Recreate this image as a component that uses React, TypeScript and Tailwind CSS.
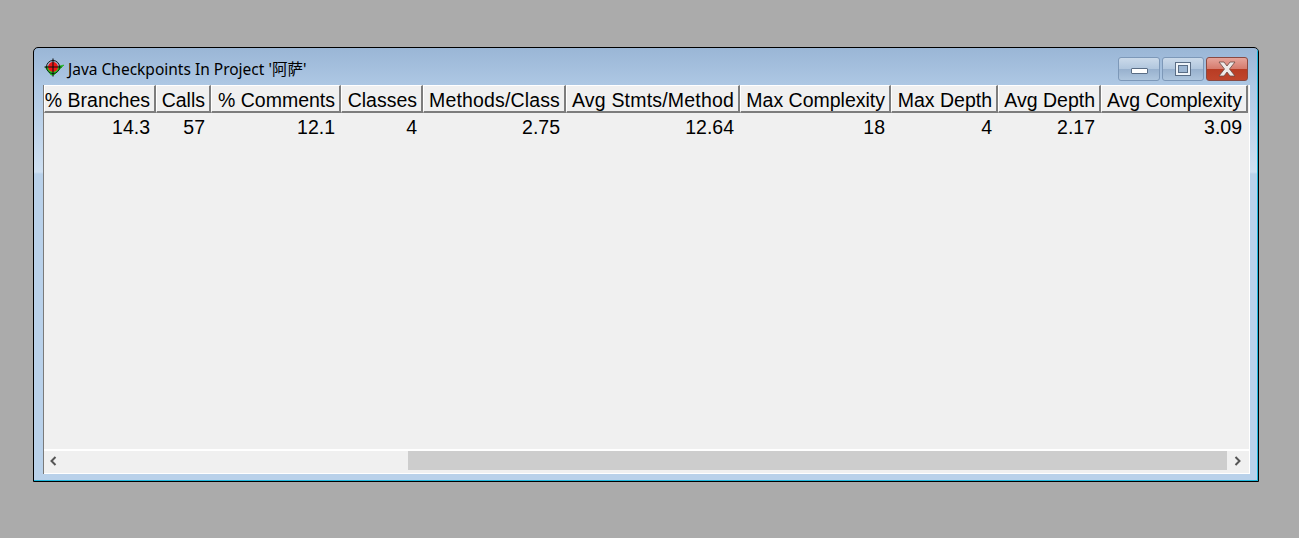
import React from "react";

const columns = [
  { label: "% Branches", value: "14.3", width: "w-[112px]", tracking: "" },
  { label: "Calls", value: "57", width: "w-[55px]", tracking: "" },
  { label: "% Comments", value: "12.1", width: "w-[130px]", tracking: "" },
  { label: "Classes", value: "4", width: "w-[82px]", tracking: "" },
  { label: "Methods/Class", value: "2.75", width: "w-[143px]", tracking: "tracking-[0.15px]" },
  { label: "Avg Stmts/Method", value: "12.64", width: "w-[174px]", tracking: "tracking-[0.19px]" },
  { label: "Max Complexity", value: "18", width: "w-[151px]", tracking: "" },
  { label: "Max Depth", value: "4", width: "w-[107px]", tracking: "" },
  { label: "Avg Depth", value: "2.17", width: "w-[103px]", tracking: "" },
  { label: "Avg Complexity", value: "3.09", width: "w-[147px]", tracking: "" },
];

const CheckpointIcon = () => (
  <svg width="22" height="22" viewBox="0 0 22 22" className="shrink-0">
    <path d="M2 10 L5 9.5 L10 14 L16 9 L21 8 L11 18 L8 18 Z" fill="#22e022" stroke="#119a11" strokeWidth="0.5" />
    <circle cx="10" cy="10" r="5" fill="#ee1414" />
    <circle cx="10" cy="10" r="6.5" fill="none" stroke="#111" strokeWidth="1" />
    <path d="M10 1.5 V19.5 M1.5 10 H18.5" stroke="#111" strokeWidth="1.1" />
  </svg>
);

const App: React.FC = () => {
  return (
    <div className="h-[538px] w-[1299px] overflow-hidden bg-[#ababab] pl-[33px] pt-[47px]">
      {/* Window */}
      <div className="h-[435px] w-[1226px] overflow-hidden rounded-t-[5px] border border-black bg-[linear-gradient(180deg,#9ab6d6_0px,#aec8e4_38px,#cfe0f2_124px,#b9d1ea_126px,#b9d1ea_100%)]">
        <div className="flex h-full flex-col border-b border-r border-[#1fb6dc]">
          {/* Title bar */}
          <div className="flex h-[37px] shrink-0 items-start pl-[9px] pr-[9px] pt-[9px]">
            <CheckpointIcon />
            <span className="ml-[3px] mt-[3px] text-[15.5px] leading-[19px] text-black [font-family:'Noto_Sans','Noto_Sans_CJK_SC',sans-serif]">
              Java Checkpoints In Project '阿萨'
            </span>
            <div className="ml-auto flex gap-[2px]">
              <div className="flex h-[24px] w-[42px] items-center justify-center rounded-[3px] border border-[#7d98b8] bg-[linear-gradient(180deg,#cbdaea_0%,#b2c7de_48%,#98b1ce_52%,#afc6de_100%)]">
                <div className="mt-[3px] h-[6px] w-[17px] rounded-[1px] border border-[#5a6d85] bg-white" />
              </div>
              <div className="flex h-[24px] w-[42px] items-center justify-center rounded-[3px] border border-[#7d98b8] bg-[linear-gradient(180deg,#cbdaea_0%,#b2c7de_48%,#98b1ce_52%,#afc6de_100%)]">
                <div className="h-[14px] w-[16px] border border-[#5a6d85] bg-[#eef3f8] p-[2px]">
                  <div className="h-full w-full border border-[#5a6d85] bg-[#9db6d2]" />
                </div>
              </div>
              <div className="flex h-[24px] w-[42px] items-center justify-center rounded-[3px] border border-[#8a4a42] bg-[linear-gradient(180deg,#e6a59b_0%,#d67c6e_48%,#b83c24_52%,#c0452c_100%)]">
                <svg width="20" height="16" viewBox="0 0 20 16">
                  <path
                    d="M2 1 H7 L10 5 L13 1 H18 L12.5 8 L18 15 H13 L10 11 L7 15 H2 L7.5 8 Z"
                    fill="#eeeae8"
                    stroke="#6b4a44"
                    strokeWidth="0.8"
                  />
                </svg>
              </div>
            </div>
          </div>

          {/* Table area */}
          <div className="ml-[9px] flex h-[389px] w-[1207px] flex-col border-l border-r border-l-[#7a7a7a] border-r-white bg-[#f0f0f0] [font-family:'Liberation_Sans',sans-serif]">
            <div className="flex h-[28px] shrink-0">
              {columns.map((c) => (
                <div
                  key={c.label}
                  className={`${c.width} ${c.tracking} flex shrink-0 items-center justify-end overflow-hidden whitespace-nowrap border-b-2 border-l border-r-2 border-t border-b-[#7d7d7d] border-l-white border-r-[#7d7d7d] border-t-white pr-[4px] pt-[2px] text-[19.5px] leading-[26px] text-black`}
                >
                  {c.label}
                </div>
              ))}
            </div>
            <div className="flex h-[28px] shrink-0">
              {columns.map((c) => (
                <div
                  key={c.label}
                  className={`${c.width} shrink-0 pr-[6px] text-right text-[19.5px] leading-[29px] text-black`}
                >
                  {c.value}
                </div>
              ))}
            </div>
            <div className="flex-1" />

            {/* Horizontal scrollbar */}
            <div className="flex h-[25px] shrink-0 items-stretch border-b border-t-2 border-b-white border-t-white bg-[#f0f0f0]">
              <div className="flex w-[19px] items-center justify-center pb-[2px]">
                <svg width="9" height="10" viewBox="0 0 9 10"><path d="M6.5 1 L2.5 5 L6.5 9" fill="none" stroke="#555" strokeWidth="2" /></svg>
              </div>
              <div className="mb-[3px] ml-[345px] w-[819px] bg-[#cdcdcd]" />
              <div className="flex w-[21px] items-center justify-center pb-[2px]">
                <svg width="9" height="10" viewBox="0 0 9 10"><path d="M2.5 1 L6.5 5 L2.5 9" fill="none" stroke="#555" strokeWidth="2" /></svg>
              </div>
            </div>
          </div>
        </div>
      </div>
    </div>
  );
};

export default App;
